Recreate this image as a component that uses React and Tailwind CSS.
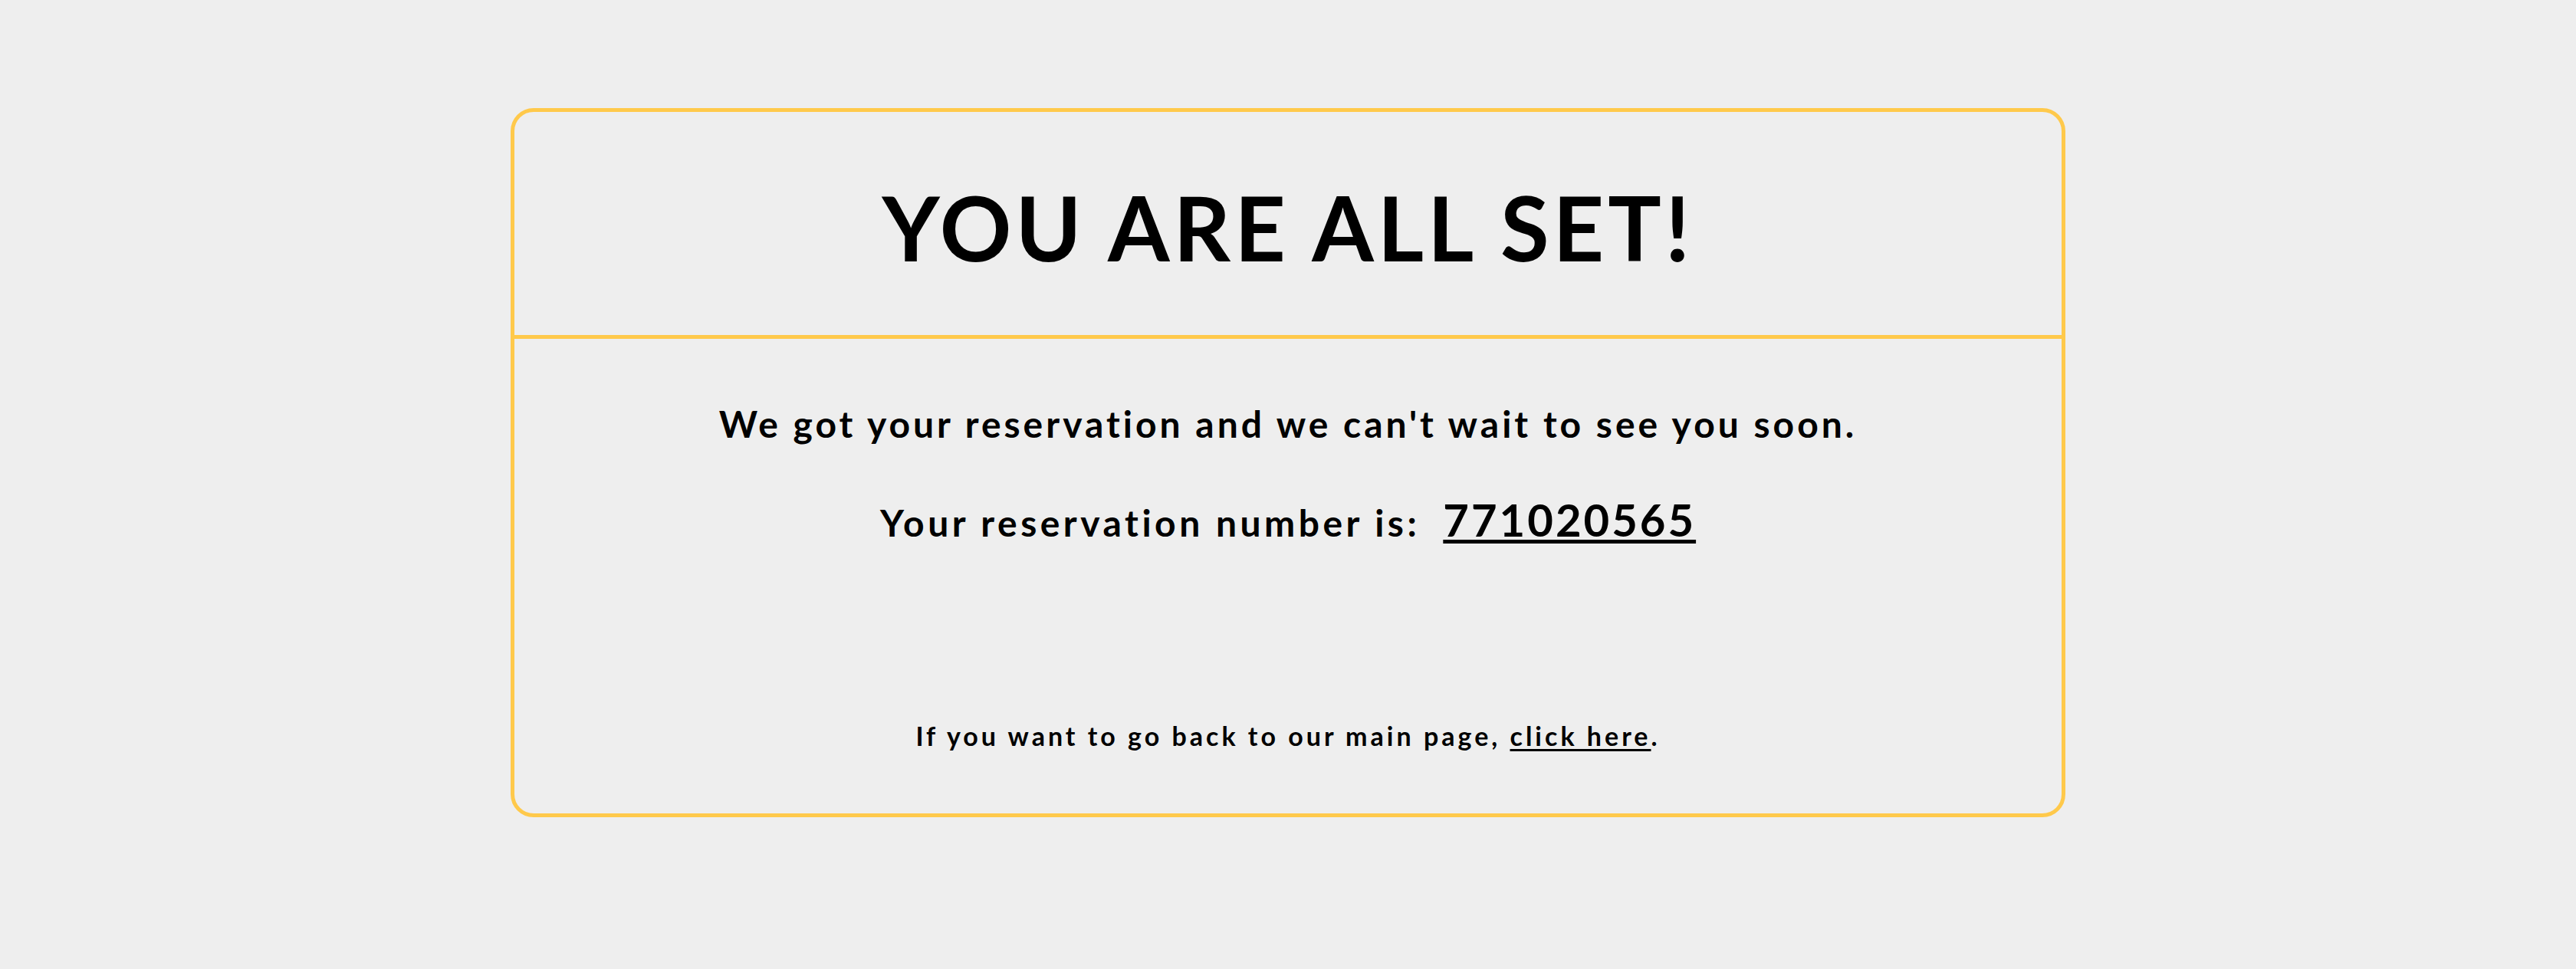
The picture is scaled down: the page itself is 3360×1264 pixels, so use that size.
import React from 'react';

export default function App() {
  return (
    <div className="min-h-[1264px] w-full bg-[#eeeeee] pt-[141px] font-['Lato','Liberation_Sans',sans-serif] text-black">
      <div className="mx-auto flex h-[925px] w-[2028px] flex-col rounded-[30px] border-[5px] border-[#ffc94b]">
        {/* Heading */}
        <div className="h-[296px] border-b-[5px] border-[#ffc94b] pt-[93px] text-center">
          <h1 className="text-[116px] font-bold leading-none tracking-[5px]">YOU ARE ALL SET!</h1>
        </div>

        {/* Message */}
        <div className="flex flex-col items-center">
          <p className="mt-[87px] text-[48px] font-bold leading-none tracking-[4px]">
            We got your reservation and we can't wait to see you soon.
          </p>
          <div className="mt-[72px] flex items-baseline justify-center gap-[30px]">
            <span className="text-[48px] font-bold leading-none tracking-[4.5px]">Your reservation number is:</span>
            <span className="text-[58px] font-bold leading-none tracking-[3px] underline decoration-[5px] underline-offset-[4px]">
              771020565
            </span>
          </div>
          <p className="mt-[236px] text-[34px] font-bold leading-none tracking-[4px]">
            If you want to go back to our main page,{' '}
            <a href="#" className="underline decoration-[3px] underline-offset-[4px]">click here</a>.
          </p>
        </div>
      </div>
    </div>
  );
}
